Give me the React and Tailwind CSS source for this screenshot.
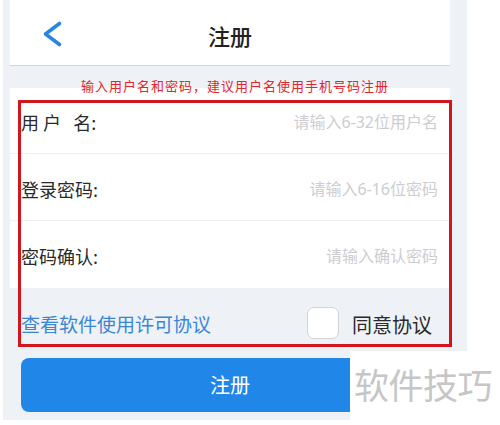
export default function App() {
  const rows = [
    { label: "用 户   名:", placeholder: "请输入6-32位用户名", h: "h-[66px] border-b" },
    { label: "登录密码:", placeholder: "请输入6-16位密码", h: "h-[67px] border-b" },
    { label: "密码确认:", placeholder: "请输入确认密码", h: "h-[67px]" },
  ];

  return (
    <div className="relative w-[500px] h-[425px] bg-white overflow-hidden font-['Noto_Sans_CJK_SC','Noto_Sans',sans-serif]">
      <div className="ml-[3px] w-[464px] h-[420px] bg-[#eef1f6] pl-[7px] pr-[17px]">
        <div className="w-[440px]">
          {/* header */}
          <div className="h-[66px] bg-white border-b border-[#d4d4d4] grid grid-cols-[1fr_auto_1fr] items-center">
            <div className="pl-[31px] pt-[3px]">
              <svg width="22" height="28" viewBox="0 0 22 28" fill="none">
                <path
                  d="M18.5 3.5 L4.5 14 L18.5 24.5"
                  stroke="#2b84e0"
                  strokeWidth="3.6"
                  strokeLinecap="round"
                  strokeLinejoin="round"
                />
              </svg>
            </div>
            <div className="text-[22px] leading-none font-medium text-[#222] pt-[4px]">注册</div>
            <div />
          </div>

          {/* hint */}
          <div className="h-[22px] pt-[13px] pl-[10px] text-center text-[13px] leading-[14px] tracking-[1px] text-[#e1262c]">
            输入用户名和密码，建议用户名使用手机号码注册
          </div>

          {/* form rows */}
          <div className="bg-white">
            {rows.map((r, i) => (
              <div
                key={i}
                className={`${r.h} border-[#efefef] flex items-center justify-between pl-[11px] pr-[12px] pt-[3px]`}
              >
                <span className="whitespace-pre text-[18px] leading-none text-[#2a2a2a]">{r.label}</span>
                <span className="font-['Noto_Sans','Noto_Sans_CJK_SC',sans-serif] text-[16px] leading-none text-[#cdcdd1]">
                  {r.placeholder}
                </span>
              </div>
            ))}
          </div>

          {/* agreement */}
          <div className="h-[70px] flex items-center justify-between pl-[11px] pr-[18px]">
            <span className="text-[19px] leading-none text-[#3a86d4]">查看软件使用许可协议</span>
            <div className="flex items-center gap-[13px]">
              <div className="w-[32px] h-[32px] rounded-[7px] bg-white border border-[#d3d3d3]" />
              <span className="text-[20px] leading-none text-[#2a2a2a] pt-[3px]">同意协议</span>
            </div>
          </div>

          {/* button */}
          <button className="ml-[11px] w-[418px] h-[54px] rounded-[8px] bg-[#2087e8] text-white text-[20px] leading-none">
            注册
          </button>
        </div>
      </div>

      {/* annotation box */}
      <div className="absolute left-[18px] top-[100px] w-[434px] h-[247px] border-[3px] border-[#d2161e]" />

      {/* watermark */}
      <div className="absolute left-[350px] top-[351px] w-[150px] h-[74px] bg-white flex items-start pt-[15px] pl-[4px]">
        <span className="text-[35px] leading-none tracking-[-0.5px] text-[#c6c6c6]">软件技巧</span>
      </div>
    </div>
  );
}
